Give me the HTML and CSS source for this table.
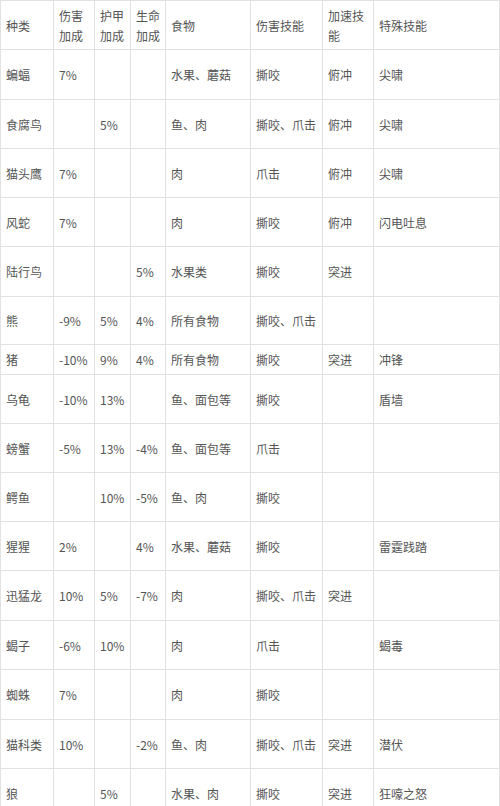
FILE: index.html
```html
<!DOCTYPE html>
<html lang="zh">
<head>
<meta charset="utf-8">
<title>宠物属性表</title>
<link rel="stylesheet" href="styles.css">
</head>
<body>
<div class="table">
  <div class="c">种类</div><div class="c">伤害加成</div><div class="c">护甲加成</div><div class="c">生命加成</div><div class="c">食物</div><div class="c">伤害技能</div><div class="c">加速技能</div><div class="c">特殊技能</div>
  <div class="c">蝙蝠</div><div class="c">7%</div><div class="c"></div><div class="c"></div><div class="c">水果、蘑菇</div><div class="c">撕咬</div><div class="c">俯冲</div><div class="c">尖啸</div>
  <div class="c">食腐鸟</div><div class="c"></div><div class="c">5%</div><div class="c"></div><div class="c">鱼、肉</div><div class="c">撕咬、爪击</div><div class="c">俯冲</div><div class="c">尖啸</div>
  <div class="c">猫头鹰</div><div class="c">7%</div><div class="c"></div><div class="c"></div><div class="c">肉</div><div class="c">爪击</div><div class="c">俯冲</div><div class="c">尖啸</div>
  <div class="c">风蛇</div><div class="c">7%</div><div class="c"></div><div class="c"></div><div class="c">肉</div><div class="c">撕咬</div><div class="c">俯冲</div><div class="c">闪电吐息</div>
  <div class="c">陆行鸟</div><div class="c"></div><div class="c"></div><div class="c">5%</div><div class="c">水果类</div><div class="c">撕咬</div><div class="c">突进</div><div class="c"></div>
  <div class="c">熊</div><div class="c">-9%</div><div class="c">5%</div><div class="c">4%</div><div class="c">所有食物</div><div class="c">撕咬、爪击</div><div class="c"></div><div class="c"></div>
  <div class="c">猪</div><div class="c">-10%</div><div class="c">9%</div><div class="c">4%</div><div class="c">所有食物</div><div class="c">撕咬</div><div class="c">突进</div><div class="c">冲锋</div>
  <div class="c">乌龟</div><div class="c">-10%</div><div class="c">13%</div><div class="c"></div><div class="c">鱼、面包等</div><div class="c">撕咬</div><div class="c"></div><div class="c">盾墙</div>
  <div class="c">螃蟹</div><div class="c">-5%</div><div class="c">13%</div><div class="c">-4%</div><div class="c">鱼、面包等</div><div class="c">爪击</div><div class="c"></div><div class="c"></div>
  <div class="c">鳄鱼</div><div class="c"></div><div class="c">10%</div><div class="c">-5%</div><div class="c">鱼、肉</div><div class="c">撕咬</div><div class="c"></div><div class="c"></div>
  <div class="c">猩猩</div><div class="c">2%</div><div class="c"></div><div class="c">4%</div><div class="c">水果、蘑菇</div><div class="c">撕咬</div><div class="c"></div><div class="c">雷霆践踏</div>
  <div class="c">迅猛龙</div><div class="c">10%</div><div class="c">5%</div><div class="c">-7%</div><div class="c">肉</div><div class="c">撕咬、爪击</div><div class="c">突进</div><div class="c"></div>
  <div class="c">蝎子</div><div class="c">-6%</div><div class="c">10%</div><div class="c"></div><div class="c">肉</div><div class="c">爪击</div><div class="c"></div><div class="c">蝎毒</div>
  <div class="c">蜘蛛</div><div class="c">7%</div><div class="c"></div><div class="c"></div><div class="c">肉</div><div class="c">撕咬</div><div class="c"></div><div class="c"></div>
  <div class="c">猫科类</div><div class="c">10%</div><div class="c"></div><div class="c">-2%</div><div class="c">鱼、肉</div><div class="c">撕咬、爪击</div><div class="c">突进</div><div class="c">潜伏</div>
  <div class="c">狼</div><div class="c"></div><div class="c">5%</div><div class="c"></div><div class="c">水果、肉</div><div class="c">撕咬</div><div class="c">突进</div><div class="c">狂嚎之怒</div>
</div>
</body>
</html>
```

FILE: styles.css
```css
html, body {
  margin: 0;
  padding: 0;
  background: #ffffff;
}

body {
  font-family: "Noto Sans CJK SC", "Noto Sans", sans-serif;
  font-size: 12px;
  color: #555555;
}

.table {
  display: grid;
  width: 500px;
  box-sizing: border-box;
  background: #e2e2e2;
  gap: 1px;
  padding: 1px;
  grid-template-columns: 52px 40px 35px 34px 84px 71px 50px 125px;
  grid-template-rows: 48px 49px 48px 48px 48px 49px 47px 29px 48px 48px 48px 48px 49px 48px 49px 48px 48px;
}

.c {
  background: #ffffff;
  display: flex;
  align-items: center;
  padding: 1px 2px 0 5px;
  line-height: 20px;
  word-break: break-all;
  overflow: hidden;
}
```
